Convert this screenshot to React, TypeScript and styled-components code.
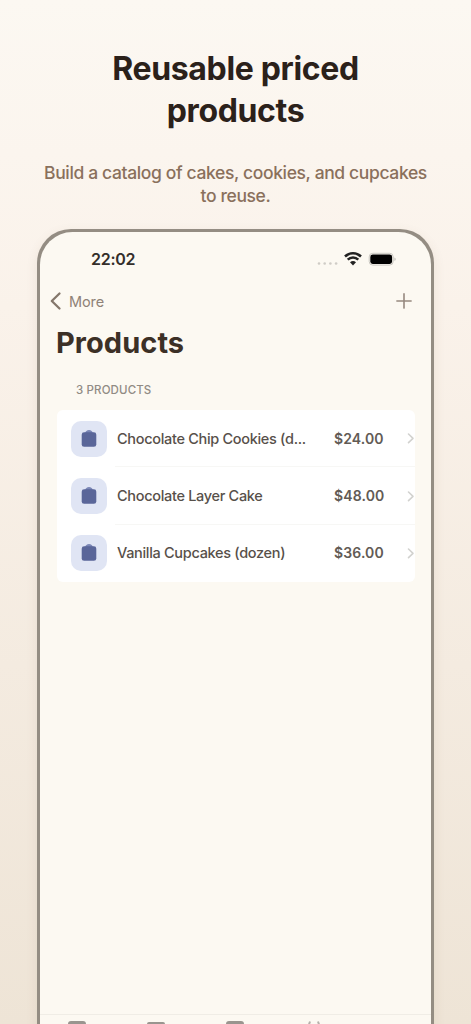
import React from "react";
import styled, { createGlobalStyle } from "styled-components";

const Global = createGlobalStyle`
  * { box-sizing: border-box; }
  body { margin: 0; font-family: Inter, "Liberation Sans", sans-serif; }
`;

const Page = styled.main`
  height: 1024px;
  overflow: hidden;
  display: flex;
  flex-direction: column;
  align-items: center;
  padding-top: 48px;
  background: linear-gradient(180deg, #fcf8f2 0%, #faf2ea 30%, #eee4d6 100%);
`;

const Headline = styled.h1`
  margin: 0;
  width: 300px;
  font-size: 32px;
  line-height: 42px;
  font-weight: 700;
  letter-spacing: -0.35px;
  text-align: center;
  color: #2b211a;
`;

const Subtitle = styled.p`
  margin: 29px 0 0;
  width: 392px;
  font-size: 17.5px;
  line-height: 23px;
  font-weight: 500;
  letter-spacing: -0.37px;
  text-align: center;
  color: #8a705c;
`;

const Phone = styled.section`
  flex: none;
  margin-top: 22px;
  width: 397px;
  height: 860px;
  display: flex;
  padding: 3px;
  border-radius: 34px;
  background: #948d83;
  box-shadow: 0 4px 12px rgba(120, 90, 60, 0.1);
`;

const Screen = styled.div`
  flex: 1;
  min-width: 0;
  display: flex;
  flex-direction: column;
  border-radius: 32.5px;
  background: #fcf9f2;
`;

const StatusBar = styled.div`
  display: flex;
  align-items: center;
  justify-content: space-between;
  height: 24px;
  margin-top: 15px;
  padding: 0 35px 0 51px;
`;

const Clock = styled.span`
  font-size: 16px;
  font-weight: 600;
  letter-spacing: -0.25px;
  color: #332e2a;
`;

const NavBar = styled.nav`
  display: flex;
  align-items: center;
  justify-content: space-between;
  height: 24px;
  margin-top: 18px;
  padding: 0 18px 0 9px;
`;

const Back = styled.div`
  display: flex;
  align-items: center;
  gap: 7px;
  font-size: 14.5px;
  letter-spacing: -0.1px;
  color: #8f8277;
`;

const Title = styled.h2`
  margin: 12px 0 0 16px;
  font-size: 29px;
  line-height: 36px;
  font-weight: 700;
  letter-spacing: 0.05px;
  color: #3c3026;
`;

const SectionLabel = styled.div`
  margin: 21px 0 0 36px;
  font-size: 11.5px;
  line-height: 16px;
  font-weight: 500;
  letter-spacing: 0.13px;
  color: #918b84;
`;

const List = styled.div`
  margin: 12px 16px 0 17px;
  border-radius: 6px;
  background: #fff;
`;

const Row = styled.div`
  display: flex;
  align-items: center;
  height: 57.4px;
  padding-left: 14px;
`;

const Tile = styled.div`
  flex: none;
  display: grid;
  place-items: center;
  width: 36px;
  height: 36px;
  border-radius: 10px;
  background: #e0e5f4;
`;

const Detail = styled.div<{ $divided: boolean }>`
  flex: 1;
  display: flex;
  align-items: center;
  height: 100%;
  margin-left: 8px;
  padding-left: 2px;
  border-bottom: 1px solid ${(p) => (p.$divided ? "#f7f7f5" : "transparent")};
`;

const Name = styled.span`
  flex: 1;
  white-space: nowrap;
  font-size: 14.5px;
  font-weight: 500;
  letter-spacing: -0.31px;
  color: #57504a;
`;

const Price = styled.span`
  width: 50px;
  white-space: nowrap;
  font-size: 14px;
  font-weight: 600;
  letter-spacing: 0.12px;
  color: #625b55;
`;

const Chevron = styled.svg`
  margin-left: 22px;
`;

const TabBar = styled.footer`
  display: flex;
  height: 60px;
  margin-top: 431.8px;
  padding: 6px 0 0 28px;
  border-top: 1px solid #f0ede6;
`;

const products = [
  { name: "Chocolate Chip Cookies (d...", price: "$24.00" },
  { name: "Chocolate Layer Cake", price: "$48.00" },
  { name: "Vanilla Cupcakes (dozen)", price: "$36.00" },
];

const StatusIcons = () => (
  <svg width="80" height="18" viewBox="0 0 80 18">
    <g fill="#cfccc6">
      <circle cx="3" cy="13.500" r="1.3" />
      <circle cx="8.7" cy="13.500" r="1.3" />
      <circle cx="14.4" cy="13.500" r="1.3" />
      <circle cx="20.1" cy="13.500" r="1.3" />
    </g>
    <g fill="none" stroke="#222" strokeWidth="2.5">
      <path d="M29 6.500a11.500 11.500 0 0 1 16 0" />
      <path d="M31.7 9.700a7.600 7.600 0 0 1 10.6 0" />
    </g>
    <path d="M34 12.300a4.400 4.400 0 0 1 6 0L37 15.400z" fill="#222" />
    <rect x="53.2" y="3.300" width="24" height="11.8" rx="3.6" fill="none" stroke="#c9c7c1" />
    <rect x="54.3" y="4.500" width="21.8" height="9.4" rx="2.4" fill="#000" />
    <path d="M78.5 7.500v3.400c1.500-.5 1.500-2.900 0-3.400z" fill="#b8b6b1" />
  </svg>
);

const Bag = () => (
  <svg width="16" height="18" viewBox="0 0 16 18">
    <path d="M4 3.500C4.300 1.300 6 0 8 0s3.700 1.300 4 3.500z" fill="#7b87b6" />
    <rect x="0.7" y="2.300" width="14.6" height="14.500" rx="2.400" fill="#5a6699" />
  </svg>
);

const TabIcons = () => (
  <svg width="260" height="24" viewBox="0 0 260 24" fill="#99958f">
    <rect x="0" y="0" width="18" height="18" rx="3" />
    <rect x="79" y="1" width="18" height="15" rx="2" />
    <rect x="158" y="0" width="18" height="18" rx="3" />
    <path d="M242 0.500l-2 6M250 0.500l2 6" stroke="#b5b1ab" strokeWidth="2" />
  </svg>
);

export default function App() {
  return (
    <Page>
      <Global />
      <Headline>Reusable priced products</Headline>
      <Subtitle>Build a catalog of cakes, cookies, and cupcakes to reuse.</Subtitle>
      <Phone>
        <Screen>
          <StatusBar>
            <Clock>22:02</Clock>
            <StatusIcons />
          </StatusBar>
          <NavBar>
            <Back>
              <svg width="13" height="20" viewBox="0 0 13 20" fill="none" stroke="#84776b" strokeWidth="2.3" strokeLinecap="round" strokeLinejoin="round">
                <path d="M10.500 2.500 2.800 10l7.700 7.500" />
              </svg>
              More
            </Back>
            <svg width="18" height="18" viewBox="0 0 18 18" stroke="#96897f" strokeWidth="1.6" strokeLinecap="round">
              <path d="M9 1.900v14.200M1.900 9h14.200" />
            </svg>
          </NavBar>
          <Title>Products</Title>
          <SectionLabel>3 PRODUCTS</SectionLabel>
          <List>
            {products.map((p, i) => (
              <Row key={p.name}>
                <Tile>
                  <Bag />
                </Tile>
                <Detail $divided={i < products.length - 1}>
                  <Name>{p.name}</Name>
                  <Price>{p.price}</Price>
                  <Chevron width="9" height="14" viewBox="0 0 9 14" fill="none" stroke="#d2d2cf" strokeWidth="1.6" strokeLinecap="round" strokeLinejoin="round">
                    <path d="M2.500 3 7 7.300l-4.500 4.300" />
                  </Chevron>
                </Detail>
              </Row>
            ))}
          </List>
          <TabBar>
            <TabIcons />
          </TabBar>
        </Screen>
      </Phone>
    </Page>
  );
}
